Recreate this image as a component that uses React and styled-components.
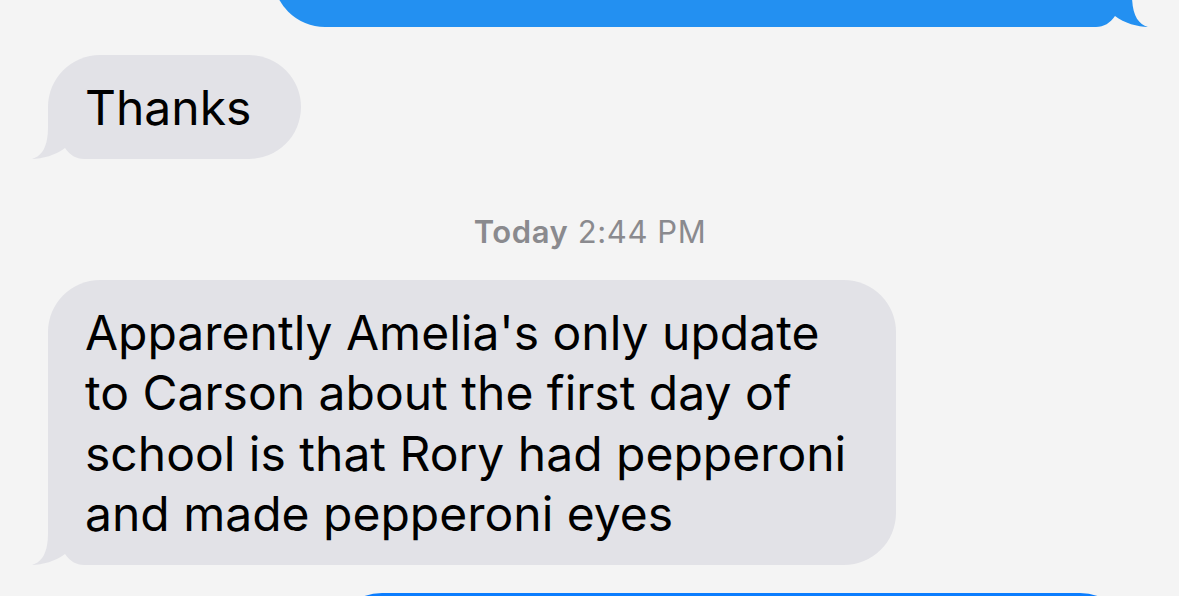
import React from "react";
import styled, { createGlobalStyle } from "styled-components";

const GlobalStyle = createGlobalStyle`
  html, body {
    margin: 0;
    padding: 0;
    background: #f4f4f4;
    overflow: hidden;
  }
  body {
    font-family: "Inter", "Noto Sans", sans-serif;
  }
`;

const Screen = styled.div`
  width: 1179px;
  height: 596px;
  overflow: hidden;
  background: #f4f4f4;
`;

const Thread = styled.div`
  display: flex;
  flex-direction: column;
  gap: 28px;
  padding: 0 47px 0 48px;
  margin-top: -93px;
`;

const Row = styled.div`
  display: flex;
  justify-content: ${(p) => (p.$side === "right" ? "flex-end" : "flex-start")};
`;

const Bubble = styled.div`
  position: relative;
  z-index: 0;
  box-sizing: border-box;
  width: ${(p) => (p.$width ? `${p.$width}px` : "auto")};
  min-height: ${(p) => (p.$minHeight ? `${p.$minHeight}px` : "0")};
  padding: 23px 50px 20px 37px;
  border-radius: 52px;
  background: ${(p) => p.$bg};
  color: #000;
  font-family: "Inter", "Noto Sans", sans-serif;
  font-size: 48px;
  line-height: 60.5px;
  letter-spacing: 0;
  white-space: nowrap;
`;

const TailSvg = styled.svg`
  position: absolute;
  z-index: -1;
  bottom: 0;
  width: 68px;
  height: 52px;
  ${(p) =>
    p.$side === "right"
      ? "right: -16px; transform: scaleX(-1);"
      : "left: -16px;"}
`;

const Timestamp = styled.div`
  margin-top: 25px;
  text-align: center;
  font-family: "Inter", "Noto Sans", sans-serif;
  font-size: 31px;
  line-height: 40px;
  color: #8a8a8e;
  letter-spacing: 0.6px;
`;

const Day = styled.span`
  font-weight: 600;
`;

function Tail({ side, color }) {
  return (
    <TailSvg $side={side} viewBox="-16 -52 68 52" aria-hidden="true">
      <path
        d="M0 -52 L0 -32 C0 -12 -6 -3 -16 0 C-6 0 8 -4 17 -11 C22 -4 28 0 36 0 L52 0 L52 -52 Z"
        fill={color}
      />
    </TailSvg>
  );
}

const GRAY = "#e2e2e7";
const BLUE_TOP = "#2390f1";
const BLUE_BOTTOM = "#0b7dfe";

export default function App() {
  return (
    <Screen>
      <GlobalStyle />
      <Thread>
        <Row $side="right">
          <Bubble $bg={BLUE_TOP} $width={859} $minHeight={120}>
            <Tail side="right" color={BLUE_TOP} />
          </Bubble>
        </Row>
        <Row $side="left">
          <Bubble $bg={GRAY}>
            Thanks
            <Tail side="left" color={GRAY} />
          </Bubble>
        </Row>
        <Timestamp>
          <Day>Today</Day> 2:44 PM
        </Timestamp>
        <Row $side="left">
          <Bubble $bg={GRAY}>
            Apparently Amelia's only update
            <br />
            to Carson about the first day of
            <br />
            school is that Rory had pepperoni
            <br />
            and made pepperoni eyes
            <Tail side="left" color={GRAY} />
          </Bubble>
        </Row>
        <Row $side="right">
          <Bubble $bg={BLUE_BOTTOM} $width={802} $minHeight={120} />
        </Row>
      </Thread>
    </Screen>
  );
}
